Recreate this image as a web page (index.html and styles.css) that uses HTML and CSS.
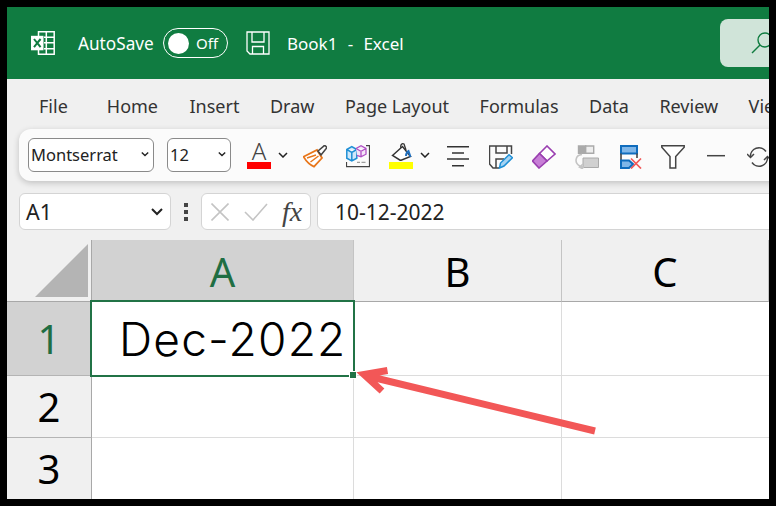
FILE: index.html
```html
<!DOCTYPE html>
<html lang="en">
<head>
<meta charset="utf-8">
<title>Book1 - Excel</title>
<link rel="stylesheet" href="styles.css">
</head>
<body>
<div class="app">
  <header class="titlebar">
    <svg class="ticon" viewBox="0 0 24 24" width="24" height="24">
      <path d="M7.500 5V.8h15.700v22.400H7.500V19M15.300.8v22.400M13 6.200h10M13 11.800h10M13 17.800h10" fill="none" stroke="#fff" stroke-width="1.500"/>
      <rect x="0" y="4.800" width="12.500" height="14.500" fill="#fff"/>
      <path d="M3 8l3.200 4-3.200 4.200M9.600 8l-3.400 4 3.400 4.200" fill="none" stroke="#107c41" stroke-width="2"/>
    </svg>
    <span class="autosave">AutoSave</span>
    <div class="toggle"><span class="knob"></span><span class="off">Off</span></div>
    <svg class="ticon saveicon" viewBox="0 0 24 24" width="24" height="24">
      <path d="M1 1h22v22H4l-3-3zM6 1v10h12V1M6.500 23v-7.500h11V23" fill="none" stroke="#fff" stroke-width="1.300"/>
    </svg>
    <span class="doc">Book1&nbsp; -&nbsp; Excel</span>
    <div class="search">
      <svg viewBox="0 0 24 24" width="24" height="24">
        <circle cx="15" cy="9" r="7" fill="none" stroke="#107c41" stroke-width="1.400"/>
        <path d="M10 14L2 22" fill="none" stroke="#107c41" stroke-width="1.400"/>
      </svg>
    </div>
  </header>

  <nav class="tabs">
    <span class="file-tab">File</span><span class="home-tab">Home</span><span>Insert</span><span>Draw</span><span>Page Layout</span><span>Formulas</span><span>Data</span><span>Review</span><span>View</span>
  </nav>

  <div class="toolbar">
    <div class="select font-select"><span>Montserrat</span><svg class="chev" viewBox="0 0 10 6" width="8" height="6"><path d="M1 1l4 4 4-4" fill="none" stroke="#222" stroke-width="1.700"/></svg></div>
    <div class="select size-select"><span>12</span><svg class="chev" viewBox="0 0 10 6" width="8" height="6"><path d="M1 1l4 4 4-4" fill="none" stroke="#222" stroke-width="1.700"/></svg></div>

    <div class="tool-group font-color">
      <div class="swatch-tool">
        <span class="a-glyph">A</span>
        <span class="swatch red"></span>
      </div>
      <svg class="chev" viewBox="0 0 10 6" width="10" height="6"><path d="M1 1l4 4 4-4" fill="none" stroke="#222" stroke-width="1.500"/></svg>
    </div>

    <svg class="icon brush" viewBox="0 0 24 24" width="24" height="24">
      <path d="M.5 11.700L14 5l5 8-8 8.700C7 20 3 16 .5 11.700z" fill="#fff" stroke="#e8761a" stroke-width="1.800"/>
      <path d="M4 13l9-3M7.500 17l8-6" stroke="#e8761a" stroke-width="1.500" fill="none"/>
      <path d="M15 6l6-5.200c1-.6 3 1 2.500 2.400L18 10z" fill="#fff" stroke="#444" stroke-width="1.600"/>
    </svg>

    <svg class="icon" viewBox="0 0 24 24" width="24" height="24">
      <path d="M20 .7h3.500v21H.5V17" fill="none" stroke="#444" stroke-width="1.200"/>
      <path d="M11 17.300h3M15.500 17.300h4" stroke="#888" stroke-width="1"/>
      <path d="M.8 4.500l5-2.800 5 2.800v8.700l-5 2.800-5-2.800zM.8 4.500l5 2.800 5-2.800M5.800 7.300V16" fill="#cfe8fa" stroke="#1e8fd5" stroke-width="1.500"/>
      <path d="M10 3.500L15 .8l5 2.700v5.700l-5 2.700-4-1.500M10 3.500l5 2.700 5-2.700M15 6.200v5.700" fill="#f4e4f7" stroke="#b04fc4" stroke-width="1.300"/>
    </svg>

    <div class="tool-group fill-color">
      <div class="swatch-tool">
        <svg viewBox="0 0 24 18" width="24" height="18">
          <path d="M3.500 12.500l10-9 8 10-10 4z" fill="#fff" stroke="#333" stroke-width="1.500"/>
          <path d="M12 5c-1-3 1-5 3-4l2 6" fill="none" stroke="#333" stroke-width="1.300"/>
          <path d="M17 13c0-3 1-4 2.500-5l2 6" fill="none" stroke="#1e6fc0" stroke-width="2"/>
        </svg>
        <span class="swatch yellow"></span>
      </div>
      <svg class="chev" viewBox="0 0 10 6" width="10" height="6"><path d="M1 1l4 4 4-4" fill="none" stroke="#222" stroke-width="1.500"/></svg>
    </div>

    <svg class="icon" viewBox="0 0 24 24" width="24" height="24">
      <path d="M1 1.700h22M6 8h12M1 14h22M6 20.700h12" fill="none" stroke="#333" stroke-width="1.500"/>
    </svg>

    <svg class="icon" viewBox="0 0 24 24" width="24" height="24">
      <path d="M10 23H4l-3.500-4V1h22v8M7 1v7h11V1M7 23v-9h8" fill="none" stroke="#444" stroke-width="1.500"/>
      <path d="M10.500 23l1-5L20 9.700l3.500 3L15 21z" fill="#a6d3f2" stroke="#1e8fd5" stroke-width="1.500"/>
    </svg>

    <svg class="icon" viewBox="0 0 24 24" width="24" height="24">
      <path d="M7.500 8.500L15 1l8 8-8 7z" fill="#fff" stroke="#9a3fb0" stroke-width="1.600"/>
      <path d="M7.500 8.500L15 16l-8 7-6.500-7z" fill="#c77fd6" stroke="#9a3fb0" stroke-width="1.600"/>
    </svg>

    <svg class="icon" viewBox="0 0 24 24" width="24" height="24">
      <path d="M3.500 1h7.200v7.300H3.500z" fill="#aaa" stroke="#aaa" stroke-width="1.400"/>
      <path d="M10.700 1h8v7.300h-8z" fill="#eee" stroke="#aaa" stroke-width="1.400"/>
      <path d="M8 13h15.500v9.500H8z" fill="#d0d0d0" stroke="#aaa" stroke-width="1"/>
      <path d="M7 9.500C0 10-1 18 5 21l4 1.500M8 19l-3.500 3L8 24" fill="none" stroke="#c4c4c4" stroke-width="1.600"/>
    </svg>

    <svg class="icon" viewBox="0 0 24 24" width="24" height="24">
      <path d="M3 1h16v7.500H3z" fill="#7fb6e8" stroke="#0f6cbd" stroke-width="2"/>
      <path d="M3 8.500V15M19 8.500V13" fill="none" stroke="#444" stroke-width="1.600"/>
      <path d="M3 15.500h8l4 3.500-4 4H3z" fill="#7fb6e8" stroke="#0f6cbd" stroke-width="2"/>
      <path d="M13 13.500l10 10M23 13.500l-10 10" stroke="#f25757" stroke-width="1.700"/>
    </svg>

    <svg class="icon" viewBox="0 0 24 24" width="24" height="24">
      <path d="M.8.800h22.400v1.500L14.700 11.500V23H9V11.500L.8 2.300z" fill="#fff" stroke="#444" stroke-width="1.500"/>
    </svg>

    <svg class="icon" viewBox="0 0 24 24" width="24" height="24">
      <path d="M3 10.700h18" stroke="#444" stroke-width="1.500"/>
    </svg>

    <svg class="icon" viewBox="0 0 24 24" width="24" height="24">
      <path d="M3.500 12A8.500 8.500 0 0 1 19 6.500M20.500 12A8.500 8.500 0 0 1 5 17.500" fill="none" stroke="#444" stroke-width="1.500"/>
      <path d="M0 9l3.500 3.500L7 9M17 15l3.500-3.500L24 15" fill="none" stroke="#444" stroke-width="1.500"/>
    </svg>
  </div>

  <div class="formula-bar">
    <div class="name-box"><span>A1</span>
      <svg viewBox="0 0 12 8" width="12" height="8"><path d="M1 1l5 5 5-5" fill="none" stroke="#222" stroke-width="2"/></svg>
    </div>
    <div class="dots"><i></i><i></i><i></i></div>
    <div class="fx-box">
      <svg viewBox="0 0 18 18" width="18" height="18"><path d="M.5.500l17 17M17.500.500l-17 17" stroke="#c4c4c4" stroke-width="1.600"/></svg>
      <svg viewBox="0 0 24 18" width="24" height="18"><path d="M1 9l8 8L23 1" fill="none" stroke="#c4c4c4" stroke-width="1.600"/></svg>
      <span class="fx">fx</span>
    </div>
    <div class="formula-input">10-12-2022</div>
  </div>

  <div class="sheet">
    <div class="corner"><svg viewBox="0 0 53 53" width="53" height="53"><path d="M53 0v53H0z" fill="#b4b4b4"/></svg></div>
    <div class="head col active">A</div>
    <div class="head col colb">B</div>
    <div class="head col colc">C</div>

    <div class="head row active r1">1</div>
    <div class="cell r1 value">Dec-2022</div>
    <div class="cell r1"></div>
    <div class="cell r1 last"></div>

    <div class="head row r2">2</div>
    <div class="cell r2"></div>
    <div class="cell r2"></div>
    <div class="cell r2 last"></div>

    <div class="head row r3">3</div>
    <div class="cell r3"></div>
    <div class="cell r3"></div>
    <div class="cell r3 last"></div>

    <div class="selection"><span class="handle"></span></div>
    <svg class="arrow" viewBox="0 0 762 259" width="762" height="259">
      <path d="M588 191L360 136M380.500 130.500L357 134.500L375 151" fill="none" stroke="#f25757" stroke-width="7"/>
    </svg>
  </div>
</div>
</body>
</html>
```

FILE: styles.css
```css
* { box-sizing: border-box; }
html, body { margin: 0; height: 100%; }
body {
  background: #000;
  padding: 7px;
  overflow: hidden;
  font-family: "Noto Sans", "Open Sans", sans-serif;
}
.app {
  width: 762px;
  height: 492px;
  background: #f0f0f0;
  overflow: hidden;
  display: flex;
  flex-direction: column;
  position: relative;
}

/* title bar */
.titlebar {
  height: 72px;
  flex: none;
  background: #107c41;
  color: #fff;
  display: flex;
  align-items: center;
  padding-left: 24px;
  font-size: 17px;
}
.ticon { flex: none; }
.autosave { margin-left: 23px; width: 85px; font-size: 17.2px; }
.toggle {
  width: 65px;
  height: 30px;
  border: 1px solid #fff;
  border-radius: 15px;
  display: flex;
  align-items: center;
  padding-left: 4px;
}
.knob { width: 21px; height: 21px; border-radius: 50%; background: #fff; }
.off { margin-left: 7px; font-size: 15px; }
.saveicon { margin-left: 18px; }
.doc { margin-left: 17px; white-space: nowrap; flex: 1; word-spacing: .7px; }
.search {
  width: 49px;
  height: 48px;
  background: #d0e4d9;
  border-radius: 8px 0 0 8px;
  padding: 12px 0 0 30px;
  overflow: hidden;
  flex: none;
}
.search svg { display: block; }

/* tabs */
.tabs {
  height: 50px;
  flex: none;
  display: flex;
  align-items: center;
  gap: 30.500px;
  padding: 3px 0 0 32px;
  font-size: 18px;
  color: #333;
  white-space: nowrap;
  overflow: hidden;
}
.file-tab { margin-right: 8.500px; }
.home-tab { margin-right: 1px; }

/* toolbar */
.toolbar {
  height: 52px;
  flex: none;
  width: 770px;
  margin-left: 12px;
  background: #fbfbfb;
  border-radius: 12px 0 0 12px;
  box-shadow: 0 2px 6px rgba(0, 0, 0, .2);
  display: flex;
  align-items: center;
  padding-left: 9px;
  position: relative;
}
.select {
  height: 34px;
  background: #fff;
  border: 1px solid #8a8a8a;
  border-radius: 6px;
  display: flex;
  align-items: center;
  justify-content: space-between;
  padding: 0 4px 2px 2px;
  font-size: 16.500px;
  color: #222;
  flex: none;
}
.font-select { width: 126px; }
.size-select { width: 64px; margin-left: 13px; }
.tool-group { display: flex; align-items: flex-start; flex: none; }
.tool-group .chev { margin: 14px 0 0 7px; }
.font-color { margin-left: 16px; }
.fill-color { margin-left: 19px; }
.swatch-tool {
  width: 24px;
  height: 34px;
  padding-bottom: 3px;
  display: flex;
  flex-direction: column;
  align-items: center;
  justify-content: flex-end;
}
.swatch-tool svg { display: block; margin-bottom: 1px; }
.a-glyph { font-size: 24px; line-height: 22px; font-weight: 300; color: #444; }
.swatch { width: 24px; height: 7px; flex: none; }
.red { background: #f00; }
.yellow { background: #ff0; }
.icon { flex: none; margin: 3px 0 0 19px; }
.brush { margin-left: 15px; }
.fill-color + .icon { margin-left: 16px; }

/* formula bar */
.formula-bar {
  height: 37px;
  flex: none;
  margin-top: 12px;
  padding-left: 12px;
  display: flex;
}
.name-box, .fx-box, .formula-input {
  background: #fff;
  border: 1px solid #d4d4d4;
  border-radius: 6px;
  display: flex;
  align-items: center;
  flex: none;
}
.name-box {
  width: 152px;
  padding: 0 7px 0 6px;
  justify-content: space-between;
  font-size: 21.500px;
  color: #222;
}
.dots {
  width: 30px;
  flex: none;
  display: flex;
  flex-direction: column;
  align-items: center;
  justify-content: center;
  gap: 3px;
}
.dots i { width: 4px; height: 4px; background: #444; display: block; }
.fx-box { width: 110px; padding-left: 9px; gap: 15px; }
.fx {
  font-family: "Liberation Serif", serif;
  font-style: italic;
  font-size: 28px;
  line-height: 1;
  color: #444;
  margin-left: -1px;
}
.formula-input {
  width: 470px;
  margin-left: 6px;
  padding-left: 17px;
  font-size: 21px;
  color: #222;
  border-radius: 6px 0 0 6px;
}

/* sheet */
.sheet {
  margin-top: 10px;
  height: 259px;
  display: grid;
  grid-template-columns: 85px 262px 208px 207px;
  grid-template-rows: 62px 74px 62px 61px;
  background: #fff;
  position: relative;
}
.corner {
  background: #f0f0f0;
  border-bottom: 1px solid #a8a8a8;
  border-right: 1px solid #a8a8a8;
  padding: 4px 0 0 28px;
}
.corner svg { display: block; }
.head {
  display: flex;
  align-items: center;
  justify-content: center;
  font-size: 40px;
  color: #000;
  background: #f0f0f0;
  line-height: 1;
}
.col { border-bottom: 1px solid #a8a8a8; border-right: 1px solid #c4c4c4; padding-top: 3px; }
.row { border-right: 1px solid #a8a8a8; border-bottom: 1px solid #b4b4b4; }
.r3.row { border-bottom: 0; }
.active { background: #d2d2d2; color: #1f6e43; }
.cell { border-right: 1px solid #dcdcdc; border-bottom: 1px solid #dcdcdc; }
.r3.cell { border-bottom: 0; }
.last { border-right: 0; }
.value {
  font-family: Inter, "Lato", sans-serif;
  font-weight: 350;
  font-size: 46px;
  letter-spacing: 1.200px;
  color: #000;
  text-align: right;
  line-height: 74px;
  padding-right: 6.500px;
  white-space: nowrap;
}
.selection {
  position: absolute;
  left: 83px;
  top: 60px;
  width: 265px;
  height: 77px;
  border: 2px solid #217346;
}
.handle {
  position: absolute;
  right: -3px;
  bottom: -3px;
  width: 6px;
  height: 6px;
  background: #217346;
  outline: 1px solid #fff;
}
.arrow { position: absolute; left: 0; top: 0; display: block; pointer-events: none; }
```
